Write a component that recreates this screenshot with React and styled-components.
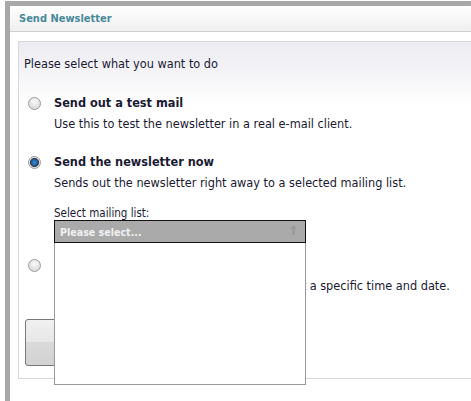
import React from 'react';
import styled, { createGlobalStyle } from 'styled-components';

const options = [
  {
    id: 'test',
    title: 'Send out a test mail',
    text: 'Use this to test the newsletter in a real e-mail client.',
    checked: false,
  },
  {
    id: 'now',
    title: 'Send the newsletter now',
    text: 'Sends out the newsletter right away to a selected mailing list.',
    checked: true,
    withList: true,
  },
  {
    id: 'later',
    title: 'Schedule the newsletter',
    text: 'Sends out the newsletter to a mailing list, at a specific time and date.',
    checked: false,
  },
];

const App = () => {
  return (
    <>
      <GlobalStyle />
      <Page>
        <Dialog>
          <TitleBar>Send Newsletter</TitleBar>
          <Body>
            <Panel>
              <Intro>Please select what you want to do</Intro>
              <OptionList>
                {options.map((opt) => (
                  <Option key={opt.id} $tight={opt.withList}>
                    <Radio $checked={opt.checked} />
                    <OptionText>
                      <OptionTitle>{opt.title}</OptionTitle>
                      <OptionDesc>{opt.text}</OptionDesc>
                      {opt.withList && (
                        <>
                          <FieldLabel>Select mailing list:</FieldLabel>
                          <SelectWrap>
                            <SelectBox>
                              Please select...
                              <svg width="7" height="10" viewBox="0 0 7 10">
                                <path d="M3.5 0 L7 4 H4.7 V10 H2.3 V4 H0 Z" fill="#9a9a9a" />
                              </svg>
                            </SelectBox>
                            <ListBox />
                          </SelectWrap>
                        </>
                      )}
                    </OptionText>
                  </Option>
                ))}
              </OptionList>
              <Button>Send newsletter</Button>
            </Panel>
          </Body>
        </Dialog>
      </Page>
    </>
  );
};

export default App;

// Styled Components

const GlobalStyle = createGlobalStyle`
  html, body {
    margin: 0;
    background: #fff;
    overflow: hidden;
  }
  body {
    font-family: "DejaVu Sans Condensed", "DejaVu Sans", sans-serif;
    font-stretch: condensed;
    color: #1a1a33;
  }
`;

const Page = styled.div`
  height: 401px;
  padding: 1px 0 0 5px;
  box-sizing: border-box;
`;

const Dialog = styled.div`
  height: 100%;
  border-top: 5px solid #a8a8a8;
  border-left: 5px solid #a8a8a8;
  background: #fff;
  box-sizing: border-box;
`;

const TitleBar = styled.div`
  height: 25px;
  display: flex;
  align-items: center;
  padding-left: 9px;
  border-bottom: 1px solid #cfcfcf;
  background: linear-gradient(#ffffff, #efefef);
  color: #48899a;
  font-weight: bold;
  font-size: 11px;
`;

const Body = styled.div`
  padding: 9px 0 0 8px;
`;

const Panel = styled.div`
  position: relative;
  margin-right: -30px;
  padding: 14px 0 12px 0;
  border: 1px solid #d8d8d8;
  background: linear-gradient(#ebebf1, #ffffff 65px);
`;

const Intro = styled.div`
  padding-left: 5px;
  font-size: 12.6px;
  line-height: 16px;
`;

const OptionList = styled.div`
  margin-top: 22px;
  display: flex;
  flex-direction: column;
`;

const Option = styled.div`
  display: flex;
  align-items: flex-start;
  gap: 13px;
  padding-left: 9px;
  margin-bottom: ${(p) => (p.$tight ? '13px' : '21px')};
`;

const Radio = styled.span`
  flex: none;
  width: 11px;
  height: 11px;
  margin-top: 3px;
  border: 1px solid #9c9c9c;
  border-radius: 50%;
  background: ${(p) =>
    p.$checked
      ? 'radial-gradient(circle, #3d8fd6 0, #1d5f9e 3px, #334 4px, #dcdcdc 5px, #f4f4f4 6px)'
      : 'radial-gradient(circle at 50% 35%, #fafafa, #d0d0d0)'};
`;

const OptionText = styled.div`
  display: flex;
  flex-direction: column;
`;

const OptionTitle = styled.div`
  font-size: 12.6px;
  font-weight: bold;
  line-height: 18px;
`;

const OptionDesc = styled.div`
  margin-top: 4px;
  font-size: 12.6px;
  line-height: 16px;
  white-space: nowrap;
`;

const FieldLabel = styled.div`
  margin-top: 15px;
  font-size: 11.5px;
  line-height: 14px;
`;

const SelectWrap = styled.div`
  position: relative;
  width: 252px;
`;

const SelectBox = styled.div`
  height: 23px;
  box-sizing: border-box;
  display: flex;
  align-items: center;
  justify-content: space-between;
  padding: 0 8px 0 5px;
  border: 1px solid #111;
  background: #aaaaaa;
  color: #f0f0f0;
  font-size: 10.6px;
  font-weight: bold;

  svg {
    margin-top: -4px;
  }
`;

const ListBox = styled.div`
  position: absolute;
  z-index: 2;
  top: 100%;
  left: 0;
  width: 100%;
  height: 142px;
  box-sizing: border-box;
  border: 1px solid #999;
  border-top: none;
  background: #fff;
`;

const Button = styled.button`
  display: block;
  margin: 4px 0 0 6px;
  width: 160px;
  height: 47px;
  border: 1px solid #777;
  border-radius: 3px;
  background: linear-gradient(#f1f1f1, #e6e6e6 50%, #d9d9d9 50%, #d2d2d2);
  font-family: inherit;
  font-size: 12px;
  color: #1a1a33;
`;
